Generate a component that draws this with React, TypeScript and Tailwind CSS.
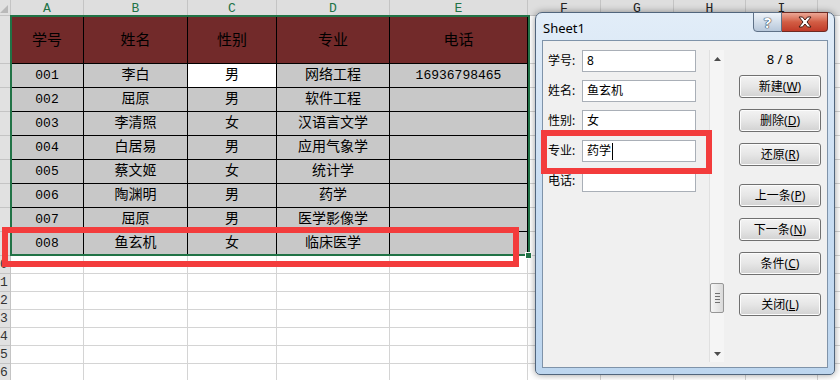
import React from "react";

type Col = { key: string; w: number };

const cols: Col[] = [
  { key: "A", w: 73 },
  { key: "B", w: 104 },
  { key: "C", w: 89 },
  { key: "D", w: 113 },
  { key: "E", w: 138 },
  { key: "F", w: 73 },
  { key: "G", w: 73 },
  { key: "H", w: 72 },
  { key: "I", w: 72 },
  { key: "J", w: 100 },
];

const heading = ["学号", "姓名", "性别", "专业", "电话"];

const records = [
  ["001", "李白", "男", "网络工程", "16936798465"],
  ["002", "屈原", "男", "软件工程", ""],
  ["003", "李清照", "女", "汉语言文学", ""],
  ["004", "白居易", "男", "应用气象学", ""],
  ["005", "蔡文姬", "女", "统计学", ""],
  ["006", "陶渊明", "男", "药学", ""],
  ["007", "屈原", "男", "医学影像学", ""],
  ["008", "鱼玄机", "女", "临床医学", ""],
];

const emptyRows = [10, 11, 12, 13, 14, 15, 16];

// row numbers sit centred in a wider header that is scrolled off to the left,
// so only the last digit of two-digit rows peeks in
function RowHeader({ n, h }: { n?: number; h: string }) {
  return (
    <div className={`w-[11px] shrink-0 overflow-hidden bg-[#e1e1e1] border-r border-b border-[#c4c4c4] ${h}`}>
      {n !== undefined && (
        <div className="w-[22px] -ml-[11px] h-full flex items-center justify-center text-[13px] text-[#333] font-['Liberation_Mono',monospace]">
          {n}
        </div>
      )}
    </div>
  );
}

function Sheet() {
  return (
    <div className="flex flex-col">
      {/* column letters */}
      <div className="flex h-[16px]">
        <div className="w-[11px] shrink-0 bg-[#e1e1e1] border-r border-b border-[#c4c4c4] relative overflow-hidden">
          <svg width="11" height="16" className="absolute left-0 top-0">
            <polygon points="0,13 8,13 8,5" fill="#b9b9b9" />
          </svg>
        </div>
        {cols.map((c, i) => (
          <div
            key={c.key}
            style={{ width: c.w }}
            className={`shrink-0 bg-[#dedede] border-r border-b border-[#c4c4c4] flex items-center justify-center text-[13px] pt-[2px] font-['Liberation_Mono',monospace] ${
              i < 5 ? "text-[#217346]" : "text-[#222]"
            }`}
          >
            {c.key !== "J" && c.key}
          </div>
        ))}
      </div>

      {/* header row of the table */}
      <div className="flex h-[48px]">
        <RowHeader h="h-[48px]" />
        {cols.map((c, i) =>
          i < 5 ? (
            <div
              key={c.key}
              style={{ width: c.w }}
              className="shrink-0 bg-[#722a2a] border-r border-b border-black flex items-center justify-center text-[15px] text-black font-['Noto_Sans_CJK_SC',sans-serif]"
            >
              {heading[i]}
            </div>
          ) : (
            <div key={c.key} style={{ width: c.w }} className="shrink-0 border-r border-b border-[#d4d4d4]" />
          )
        )}
      </div>

      {records.map((r, ri) => (
        <div key={ri} className="flex h-[24px]">
          <RowHeader h="h-[24px]" />
          {cols.map((c, i) => {
            if (i >= 5)
              return <div key={c.key} style={{ width: c.w }} className="shrink-0 border-r border-b border-[#d4d4d4]" />;
            const v = r[i];
            const digits = /^\d+$/.test(v);
            const active = ri === 0 && i === 2;
            return (
              <div
                key={c.key}
                style={{ width: c.w }}
                className={`shrink-0 border-r border-b border-black flex items-center justify-center text-black font-['Liberation_Mono','Noto_Sans_CJK_SC',monospace] ${
                  digits ? "text-[13px]" : "text-[14px]"
                } ${active ? "bg-white" : "bg-[#c8c8c8]"}`}
              >
                {v}
              </div>
            );
          })}
        </div>
      ))}

      {emptyRows.map((n) => (
        <div key={n} className="flex h-[18px]">
          <RowHeader n={n} h="h-[18px]" />
          {cols.map((c) => (
            <div key={c.key} style={{ width: c.w }} className="shrink-0 border-r border-b border-[#d4d4d4]" />
          ))}
        </div>
      ))}
    </div>
  );
}

function Btn({ label, k }: { label: string; k: string }) {
  return (
    <div className="w-[82px] h-[23px] rounded-[3px] border border-[#707070] bg-gradient-to-b from-[#f3f3f3] via-[#e6e6e6] to-[#d2d2d2] shadow-[inset_0_0_0_1px_#fcfcfc] flex items-center justify-center text-[12px] text-black font-['Noto_Sans','Noto_Sans_CJK_SC',sans-serif]">
      {label}(<span className="underline">{k}</span>)
    </div>
  );
}

const fields = [
  ["学号", "8"],
  ["姓名", "鱼玄机"],
  ["性别", "女"],
  ["专业", "药学"],
  ["电话", ""],
];

function DataForm() {
  return (
    <div className="absolute left-[535px] top-[12px] w-[300px] h-[363px] rounded-t-[7px] rounded-b-[5px] border border-[#51657c] bg-gradient-to-b from-[#e2edf8] via-[#c9ddf2] to-[#bdd6ef] shadow-[0_0_7px_rgba(0,0,0,0.4)] flex flex-col font-['Noto_Sans','Noto_Sans_CJK_SC',sans-serif]">
      <div className="h-[27px] flex items-start justify-between shrink-0">
        <span className="ml-[7px] mt-[6px] text-[13px] text-black">Sheet1</span>
        <div className="flex mr-[6px] -mt-[1px]">
          <div className="w-[29px] h-[20px] rounded-bl-[4px] border border-[#5f7187] bg-gradient-to-b from-[#eef3f9] via-[#d3deea] to-[#b7c7da] flex items-center justify-center">
            <span className="text-[15px] font-bold text-white leading-none [text-shadow:0_0_1px_#2b3a4d,0_0_1px_#2b3a4d,0_0_1px_#2b3a4d]">?</span>
          </div>
          <div className="w-[46px] h-[20px] rounded-br-[4px] border border-l-0 border-[#6e2a22] bg-gradient-to-b from-[#eba796] via-[#d25d44] to-[#c03a28] flex items-center justify-center">
            <svg width="16" height="12" viewBox="0 0 16 12">
              <path
                d="M2 1 L5.5 1 L8 4 L10.5 1 L14 1 L10 6 L14 11 L10.5 11 L8 8 L5.5 11 L2 11 L6 6 Z"
                fill="#ffffff"
                stroke="#3d1a14"
                strokeWidth="1"
                strokeLinejoin="round"
              />
            </svg>
          </div>
        </div>
      </div>

      <div className="mx-[6px] mb-[6px] flex-1 border border-[#7f93a9] bg-[#f0f0f0] flex">
        <div className="pl-[5px] pt-[9px] flex flex-col gap-[8px]">
          {fields.map(([label, value]) => (
            <div key={label} className="flex items-center h-[22px]">
              <span className="w-[34px] text-[12px] text-black">{label}:</span>
              <div className="w-[114px] h-[22px] border border-[#a9afb7] bg-white pl-[4px] flex items-center text-[12px] text-black">
                {value}
                {label === "专业" && <span className="ml-[1px] w-[1px] h-[17px] bg-black" />}
              </div>
            </div>
          ))}
        </div>

        {/* vertical scroll bar */}
        <div className="ml-[13px] mt-[9px] w-[15px] h-[312px] bg-[#f5f5f5] border-l border-[#e0e0e0] flex flex-col items-center">
          <div className="h-[17px] flex items-center justify-center">
            <svg width="7" height="4">
              <polygon points="0,4 7,4 3.5,0" fill="#4d4d4d" />
            </svg>
          </div>
          <div className="flex-1 w-full flex flex-col items-center">
            <div className="h-[216px]" />
            <div className="w-[14px] h-[30px] rounded-[2px] border border-[#969696] bg-gradient-to-r from-[#f6f6f6] to-[#dadada] flex flex-col items-center justify-center gap-[2px]">
              <div className="w-[5px] h-[1px] bg-[#707070]" />
              <div className="w-[5px] h-[1px] bg-[#707070]" />
              <div className="w-[5px] h-[1px] bg-[#707070]" />
              <div className="w-[5px] h-[1px] bg-[#707070]" />
            </div>
          </div>
          <div className="h-[17px] flex items-center justify-center">
            <svg width="7" height="4">
              <polygon points="0,0 7,0 3.5,4" fill="#4d4d4d" />
            </svg>
          </div>
        </div>

        <div className="ml-[15px] pt-[9px] w-[82px] flex flex-col">
          <div className="h-[20px] flex items-center justify-center text-[13px] text-black">8 / 8</div>
          <div className="mt-[5px] flex flex-col gap-[11px]">
            <Btn label="新建" k="W" />
            <Btn label="删除" k="D" />
            <Btn label="还原" k="R" />
          </div>
          <div className="mt-[18px] flex flex-col gap-[11px]">
            <Btn label="上一条" k="P" />
            <Btn label="下一条" k="N" />
            <Btn label="条件" k="C" />
          </div>
          <div className="mt-[18px]">
            <Btn label="关闭" k="L" />
          </div>
        </div>
      </div>
    </div>
  );
}

export default function App() {
  return (
    <div className="relative w-[840px] h-[380px] overflow-hidden bg-white">
      <Sheet />

      {/* selected range A1:E9 */}
      <div className="absolute left-[10px] top-[15px] w-[520px] h-[241px] border-2 border-[#217346]" />
      <div className="absolute left-[525px] top-[252px] w-[7px] h-[7px] bg-[#217346] border border-white" />

      {/* highlight marks */}
      <div className="absolute left-[2px] top-[227px] w-[517px] h-[40px] border-[6px] border-[#f33c3c]" />

      <DataForm />

      <div className="absolute left-[541px] top-[130px] w-[171px] h-[44px] border-[6px] border-[#f33c3c]" />
    </div>
  );
}
